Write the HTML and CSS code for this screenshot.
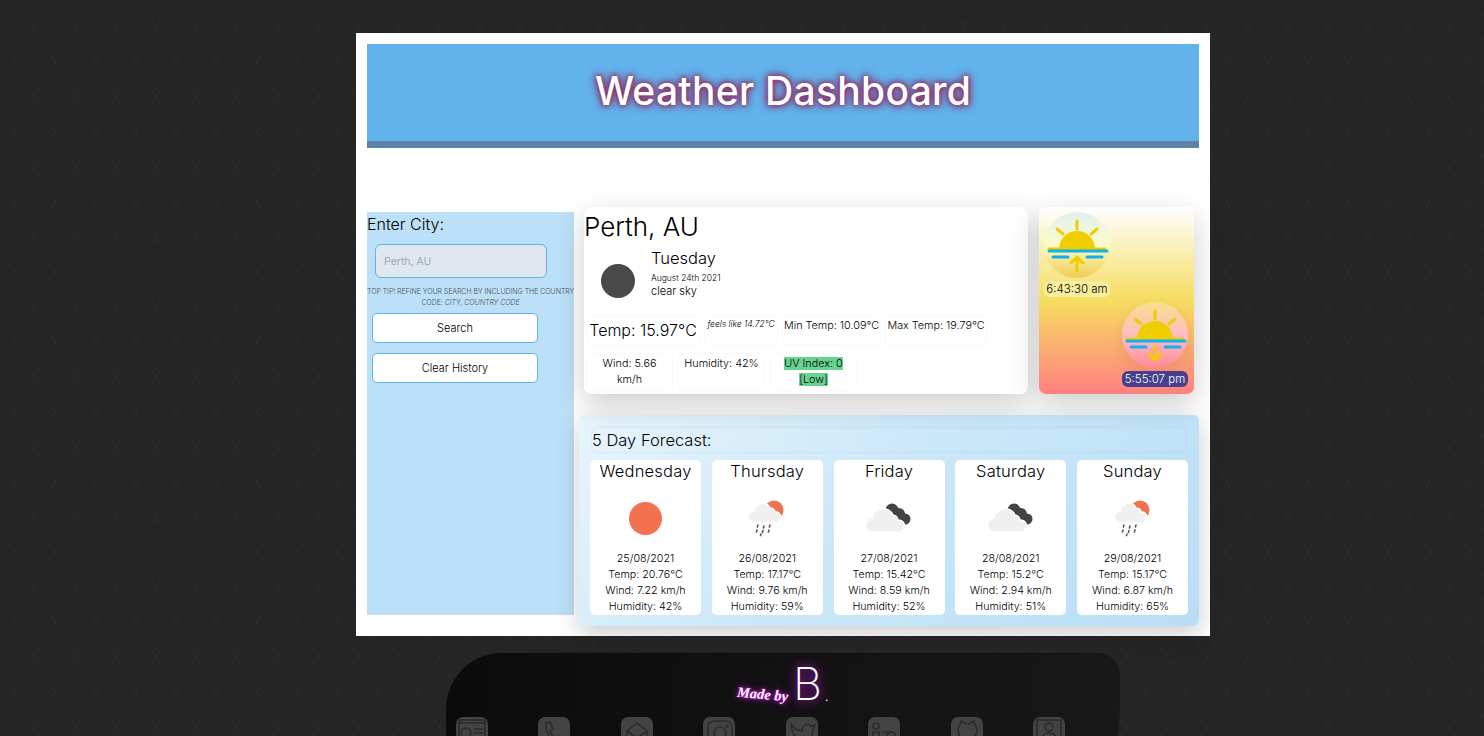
FILE: index.html
```html
<!DOCTYPE html>
<html lang="en">
<head>
    <meta charset="UTF-8">
    <title>Weather Dashboard</title>
    <link rel="stylesheet" href="styles.css">
</head>
<body>
    <svg class="defs" width="0" height="0">
        <symbol id="sun-base" viewBox="0 0 66 66">
            <path d="M15 37a18 18 0 0 1 36 0z" fill="#f0cd00"/>
            <path d="M33 9v8M13 17l6 5M53 17l-6 5" stroke="#f0cd00" stroke-width="3" stroke-linecap="round" fill="none"/>
            <path d="M5 37h56" stroke="#f0cd00" stroke-width="3" stroke-linecap="round"/>
            <path d="M5 39h58" stroke="#0db2f2" stroke-width="3" stroke-linecap="round"/>
            <path d="M9 45h15M43 45h15" stroke="#0db2f2" stroke-width="3" stroke-linecap="round"/>
        </symbol>
        <symbol id="rain" viewBox="0 0 40 40">
            <circle cx="27" cy="12" r="9.500" fill="#f2724f"/>
            <path d="M8 25a6 6 0 0 1-1-12 8.500 8.500 0 0 1 16-3 5 5 0 0 1 5 4 5.500 5.500 0 0 1 1 11z" fill="#f0f0f0" stroke="#fff" stroke-width="1.500"/>
            <path d="M11 27l-.6 2M17 28l-.6 2M23 27l-.6 2M10 32l-.6 2M16 32.500l-.6 2M22 32l-.6 2M14 36l-.5 1.500" stroke="#5a5a5a" stroke-width="1.600" fill="none" stroke-linecap="round"/>
        </symbol>
        <symbol id="clouds" viewBox="0 0 48 32">
            <circle cx="27" cy="8" r="6.500" fill="#444"/>
            <circle cx="34" cy="12" r="6" fill="#444"/>
            <circle cx="40" cy="17" r="5.500" fill="#444"/>
            <path d="M8 30a7 7 0 0 1-1-14 11 11 0 0 1 21-3 6 6 0 0 1 5 5 6 6 0 0 1 1 12z" fill="#f0f0f0" stroke="#fff" stroke-width="1.500"/>
        </symbol>
    </svg>

    <div class="panel">
        <header class="banner">
            <h1>Weather Dashboard</h1>
        </header>

        <main class="dash">
            <aside class="sidebar">
                <label class="city-label" for="city">Enter City:</label>
                <input class="city-input" id="city" type="text" placeholder="Perth, AU">
                <p class="tip">Top tip! Refine your search by including the country<br>code: <em>city, country code</em></p>
                <button class="btn" type="button">Search</button>
                <button class="btn" type="button">Clear History</button>
            </aside>

            <section class="results">
                <div class="top-row">
                    <div class="current">
                        <h2 class="city-name">Perth, AU</h2>
                        <div class="today">
                            <span class="today-icon"></span>
                            <div>
                                <div class="today-day">Tuesday</div>
                                <div class="today-date">August 24th 2021</div>
                                <div class="today-desc">clear sky</div>
                            </div>
                        </div>
                        <div class="stats stats-one">
                            <div class="stat stat-temp">Temp: 15.97°C</div>
                            <div class="stat stat-feels">feels like 14.72°C</div>
                            <div class="stat stat-min">Min Temp: 10.09°C</div>
                            <div class="stat stat-max">Max Temp: 19.79°C</div>
                        </div>
                        <div class="stats stats-two">
                            <div class="stat stat-low stat-wind">Wind: 5.66 km/h</div>
                            <div class="stat stat-low">Humidity: 42%</div>
                            <div class="stat stat-low"><span class="uv">UV Index: 0<br>[Low]</span></div>
                        </div>
                    </div>

                    <div class="sun-card">
                        <div class="sun-item">
                            <div class="sun-disc sunrise">
                                <svg width="66" height="66"><use href="#sun-base"/><path d="M33 59V45M27 51l6-6 6 6" stroke="#f0cd00" stroke-width="3" fill="none" stroke-linecap="round"/></svg>
                            </div>
                            <div class="sun-time">6:43:30 am</div>
                        </div>
                        <div class="sun-item sun-item-end">
                            <div class="sun-disc sunset">
                                <svg width="66" height="66"><use href="#sun-base"/><path d="M33 44v14M27 52l6 6 6-6" stroke="#f0cd00" stroke-width="3" fill="none" stroke-linecap="round"/></svg>
                            </div>
                            <div class="sun-time sun-time-dark">5:55:07 pm</div>
                        </div>
                    </div>
                </div>

                <div class="forecast">
                    <h3 class="forecast-title">5 Day Forecast:</h3>
                    <div class="days">
                        <div class="day">
                            <div class="day-name">Wednesday</div>
                            <div class="day-icon"><span class="sun-dot"></span></div>
                            <p>25/08/2021</p><p>Temp: 20.76°C</p><p>Wind: 7.22 km/h</p><p>Humidity: 42%</p>
                        </div>
                        <div class="day">
                            <div class="day-name">Thursday</div>
                            <div class="day-icon"><svg width="40" height="40"><use href="#rain"/></svg></div>
                            <p>26/08/2021</p><p>Temp: 17.17°C</p><p>Wind: 9.76 km/h</p><p>Humidity: 59%</p>
                        </div>
                        <div class="day">
                            <div class="day-name">Friday</div>
                            <div class="day-icon"><svg width="48" height="32"><use href="#clouds"/></svg></div>
                            <p>27/08/2021</p><p>Temp: 15.42°C</p><p>Wind: 8.59 km/h</p><p>Humidity: 52%</p>
                        </div>
                        <div class="day">
                            <div class="day-name">Saturday</div>
                            <div class="day-icon"><svg width="48" height="32"><use href="#clouds"/></svg></div>
                            <p>28/08/2021</p><p>Temp: 15.2°C</p><p>Wind: 2.94 km/h</p><p>Humidity: 51%</p>
                        </div>
                        <div class="day">
                            <div class="day-name">Sunday</div>
                            <div class="day-icon"><svg width="40" height="40"><use href="#rain"/></svg></div>
                            <p>29/08/2021</p><p>Temp: 15.17°C</p><p>Wind: 6.87 km/h</p><p>Humidity: 65%</p>
                        </div>
                    </div>
                </div>
            </section>
        </main>
    </div>

    <footer class="footer">
        <div class="signature">
            <span class="made-by">Made by</span>
            <span class="initial">B</span>
            <span class="dot">.</span>
        </div>
        <div class="links">
            <a class="link"><svg viewBox="0 0 32 32"><path d="M3 6h26M3 3h26v26H3z"/><circle cx="10" cy="16" r="5"/><path d="M18 12h9M18 16h9M18 20h9"/></svg></a>
            <a class="link"><svg viewBox="0 0 32 32"><path d="M8 6l4-1 3 7-3 2c1 4 3 6 6 8l3-3 6 4-2 4c-10 0-18-10-17-21z"/></svg></a>
            <a class="link"><svg viewBox="0 0 32 32"><path d="M6 14L16 6l10 8v14H6zM6 14l10 7 10-7"/></svg></a>
            <a class="link"><svg viewBox="0 0 32 32"><rect x="5" y="4" width="24" height="24" rx="6"/><circle cx="17" cy="16" r="6"/><circle cx="24" cy="9" r="1"/></svg></a>
            <a class="link"><svg viewBox="0 0 32 32"><path d="M5 7c4 5 7 7 11 7 0-6 6-8 9-5l4-1-2 4c0 9-7 16-21 14 3 0 5-1 7-3-4-2-7-8-8-16z"/></svg></a>
            <a class="link"><svg viewBox="0 0 32 32"><circle cx="8" cy="9" r="3"/><path d="M5 15h6v14H5zM14 15h5v3c3-5 9-3 9 3v8"/></svg></a>
            <a class="link"><svg viewBox="0 0 32 32"><path d="M7 13c0-3 1-4 2-5l1-4 5 3h3l5-3 1 4c1 1 2 2 2 5 0 6-4 9-10 9s-9-3-9-9z"/></svg></a>
            <a class="link"><svg viewBox="0 0 32 32"><rect x="4" y="3" width="24" height="26"/><circle cx="16" cy="10" r="4"/><path d="M9 22c0-8 14-8 14 0"/></svg></a>
        </div>
    </footer>
</body>
</html>
```

FILE: styles.css
```css
* {
    box-sizing: border-box;
}

html, body {
    height: 736px;
    overflow: hidden;
}

body {
    margin: 0;
    padding: 33px 0 0 356px;
    font-family: Inter, "Noto Sans", sans-serif;
    font-weight: 350;
    color: #000;
    background-color: #252525;
    background-image:
        repeating-linear-gradient(60deg, transparent 0 34px, #2a2a2a 34px 35px),
        repeating-linear-gradient(-60deg, transparent 0 34px, #2a2a2a 34px 35px);
}

.defs {
    display: block;
    height: 0;
}

.panel {
    width: 854px;
    height: 603px;
    padding: 11px;
    background: #fff;
}

.banner {
    height: 104px;
    display: flex;
    align-items: center;
    justify-content: center;
    padding-bottom: 5px;
    background: #62b2ec;
    border-bottom: 7px solid #5c83a3;
}

h1 {
    margin: 0;
    color: #fff;
    font-size: 39px;
    font-weight: 500;
    letter-spacing: 0.3px;
    text-shadow: 0 0 4px #8c2f68, 0 0 8px #8c2f68, 0 0 9px #8c2f68;
}

.dash {
    display: flex;
    gap: 5px;
    margin-top: 59px;
}

.sidebar {
    width: 207px;
    height: 403px;
    margin-top: 5px;
    background: #bbe0f7;
}

.city-label {
    display: block;
    height: 24px;
    font-size: 16px;
    line-height: 24px;
}

.city-input {
    display: block;
    width: 172px;
    height: 34px;
    margin: 8px 0 0 8px;
    padding: 0 8px;
    font-family: inherit;
    font-size: 10.5px;
    background: #e0e7ef;
    border: 1px solid #62b2ec;
    border-radius: 6px;
}

.city-input::placeholder {
    color: #9aa8bb;
}

.tip {
    margin: 8px 0 0;
    color: #4a4f56;
    font-size: 7px;
    line-height: 11px;
    letter-spacing: -0.05px;
    text-align: center;
    text-transform: uppercase;
    white-space: nowrap;
}

.btn {
    display: block;
    width: 166px;
    height: 30px;
    margin: 5px 0 10px 5px;
    padding: 0 0 1px;
    font-family: inherit;
    font-size: 11px;
    font-weight: inherit;
    color: #000;
    background: #fff;
    border: 1px solid #62b2ec;
    border-radius: 5px;
}

.results {
    width: 620px;
}

.top-row {
    display: flex;
    gap: 11px;
    padding-left: 5px;
    height: 187px;
}

.current {
    width: 444px;
    background: #fff;
    border-radius: 7px;
    box-shadow: 0 10px 30px rgba(0, 0, 0, 0.2);
}

.city-name {
    margin: 0;
    height: 40px;
    font-size: 26px;
    font-weight: 350;
    line-height: 40px;
}

.today {
    display: flex;
    align-items: flex-start;
    height: 64px;
    padding-left: 17px;
}

.today-icon {
    width: 34px;
    height: 34px;
    margin: 17px 16px 0 0;
    border-radius: 50%;
    background: #4a4a4a;
}

.today-day {
    font-size: 16.5px;
    line-height: 22px;
}

.today-date {
    margin-top: 2px;
    font-size: 8.5px;
    line-height: 14px;
}

.today-desc {
    font-size: 11px;
    line-height: 13px;
}

.stats {
    display: flex;
    padding-left: 3px;
    font-size: 10.8px;
}

.stats-one {
    gap: 6px;
    margin-top: 5px;
}

.stats-two {
    gap: 7px;
    margin-top: 9px;
}

.stat {
    text-align: center;
    line-height: 16px;
    border-radius: 6px;
    box-shadow: 0 0 2px rgba(0, 0, 0, 0.08);
}

.stats-one .stat {
    height: 29px;
    white-space: nowrap;
}

.stat-temp {
    width: 112px;
    font-size: 16px;
    line-height: 29px !important;
}

.stat-feels {
    width: 72px;
    font-size: 8.5px;
    font-style: italic;
    line-height: 17px !important;
}

.stat-min {
    width: 97px;
}

.stat-max {
    width: 100px;
}

.stat-min,
.stat-max {
    padding-top: 2px;
}

.stat-low {
    width: 85px;
    height: 36px;
    padding-top: 2px;
}

.stat-wind {
    padding-left: 10px;
    padding-right: 10px;
}

.uv {
    background: #68d391;
}

.sun-card {
    display: flex;
    flex-direction: column;
    width: 155px;
    padding: 5px 6px 0 5px;
    background: linear-gradient(#fff 0%, #f6dd60 50%, #ff8080 100%);
    border-radius: 7px;
    box-shadow: 0 10px 30px rgba(0, 0, 0, 0.2);
}

.sun-item {
    width: 66px;
}

.sun-item-end {
    align-self: flex-end;
    margin-top: 5px;
}

.sun-disc {
    width: 66px;
    height: 66px;
    border-radius: 50%;
}

.sun-disc svg {
    display: block;
}

.sunrise {
    background: linear-gradient(#dff0f2 0%, #fdfcc8 50%, #efcd52 100%);
}

.sunset {
    background: linear-gradient(#f8e08c 0%, #ffb8c8 55%, #ff8a90 100%);
    box-shadow: 0 6px 16px rgba(0, 0, 0, 0.08);
}

.sun-time {
    height: 16px;
    margin-top: 3px;
    font-size: 11.5px;
    line-height: 16px;
    text-align: center;
    white-space: nowrap;
    background: #f9ee9e;
    border-radius: 6px;
}

.sun-time-dark {
    color: #fff;
    background: #453f8e;
}

.forecast {
    height: 211px;
    margin-top: 21px;
    padding: 13px 11px 11px;
    background: linear-gradient(135deg, #e8f5fc 0%, #cbe8f9 45%, #b8def6 100%);
    border-radius: 6px;
    box-shadow: 0 8px 24px rgba(0, 0, 0, 0.2);
}

.forecast-title {
    height: 24px;
    margin: 0 2px 8px 2px;
    font-size: 16.5px;
    font-weight: 350;
    line-height: 24px;
    border-radius: 6px;
    box-shadow: 0 0 2px rgba(90, 130, 160, 0.2);
}

.days {
    display: flex;
    justify-content: space-between;
}

.day {
    width: 111px;
    height: 155px;
    text-align: center;
    background: #fff;
    border-radius: 5px;
}

.day-name {
    height: 23px;
    font-size: 16.5px;
    line-height: 23px;
    letter-spacing: 0.2px;
}

.day-icon {
    display: flex;
    align-items: center;
    justify-content: center;
    height: 68px;
    padding-top: 2px;
}

.sun-dot {
    width: 33px;
    height: 33px;
    border-radius: 50%;
    background: #f2724f;
}

.day p {
    margin: 0;
    font-size: 10.7px;
    line-height: 16px;
}

.footer {
    width: 674px;
    height: 83px;
    margin: 17px 0 0 90px;
    overflow: hidden;
    background: linear-gradient(90deg, #0b0b0b 0%, #181818 100%);
    border-radius: 56px 22px 3px 0 / 56px 22px 36px 0;
}

.signature {
    display: flex;
    align-items: flex-end;
    height: 55px;
    margin-bottom: 9px;
    padding-left: 291px;
    color: #fff;
}

.made-by {
    width: 50px;
    margin: 0 6px 5px 0;
    font-family: "Liberation Serif", serif;
    font-size: 14.5px;
    font-style: italic;
    font-weight: 700;
    white-space: nowrap;
    transform: rotate(5deg);
    text-shadow: 0 0 3px #f0f, 0 0 7px #d020ff;
}

.initial {
    font-size: 45px;
    font-weight: 200;
    line-height: 48px;
    text-shadow: 0 0 8px #a018b0, 0 0 14px #8a10a0;
}

.dot {
    font-size: 12px;
    font-weight: 400;
    line-height: 22px;
    margin-left: 3px;
}

.links {
    display: flex;
    justify-content: space-between;
    padding: 0 55px 0 10px;
}

.link {
    width: 32px;
    height: 32px;
    background: #434343;
    border-radius: 7px;
}

.link svg {
    display: block;
    fill: none;
    stroke: #2b2b2b;
    stroke-width: 1.6;
}
```
